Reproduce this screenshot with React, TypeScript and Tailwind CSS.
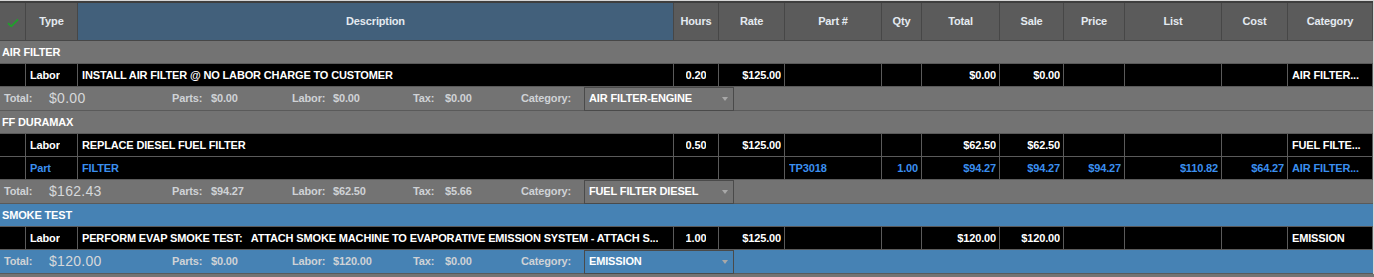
import React from 'react';

type Line = {
  type: 'Labor' | 'Part';
  desc: string;
  hours?: string;
  rate?: string;
  partNo?: string;
  qty?: string;
  total?: string;
  sale?: string;
  price?: string;
  list?: string;
  cost?: string;
  category: string;
};

type Job = {
  title: string;
  blue?: boolean;
  lines: Line[];
  total: string;
  parts: string;
  labor: string;
  tax: string;
  category: string;
};

const JOBS: Job[] = [
  {
    title: 'AIR FILTER',
    lines: [
      { type: 'Labor', desc: 'INSTALL AIR FILTER @ NO LABOR CHARGE TO CUSTOMER', hours: '0.20', rate: '$125.00', total: '$0.00', sale: '$0.00', category: 'AIR FILTER...' },
    ],
    total: '$0.00', parts: '$0.00', labor: '$0.00', tax: '$0.00', category: 'AIR FILTER-ENGINE',
  },
  {
    title: 'FF DURAMAX',
    lines: [
      { type: 'Labor', desc: 'REPLACE DIESEL FUEL FILTER', hours: '0.50', rate: '$125.00', total: '$62.50', sale: '$62.50', category: 'FUEL FILTE...' },
      { type: 'Part', desc: 'FILTER', partNo: 'TP3018', qty: '1.00', total: '$94.27', sale: '$94.27', price: '$94.27', list: '$110.82', cost: '$64.27', category: 'AIR FILTER...' },
    ],
    total: '$162.43', parts: '$94.27', labor: '$62.50', tax: '$5.66', category: 'FUEL FILTER DIESEL',
  },
  {
    title: 'SMOKE TEST',
    blue: true,
    lines: [
      { type: 'Labor', desc: 'PERFORM EVAP SMOKE TEST:   ATTACH SMOKE MACHINE TO EVAPORATIVE EMISSION SYSTEM - ATTACH S...', hours: '1.00', rate: '$125.00', total: '$120.00', sale: '$120.00', category: 'EMISSION' },
    ],
    total: '$120.00', parts: '$0.00', labor: '$120.00', tax: '$0.00', category: 'EMISSION',
  },
];

const GRID = 'grid grid-cols-[26px_52px_596px_45px_66px_97px_40px_78px_64px_61px_97px_66px_85px]';

const HEADERS = ['Type', 'Description', 'Hours', 'Rate', 'Part #', 'Qty', 'Total', 'Sale', 'Price', 'List', 'Cost', 'Category'];

const Check = () => (
  <svg width="12" height="10" viewBox="0 0 12 10">
    <path d="M1 5.2 L4.3 8.3 L11 1.5" fill="none" stroke="#1fa12b" strokeWidth="1.8" />
  </svg>
);

const Cell = ({ children, align = 'left', blue }: { children?: React.ReactNode; align?: 'left' | 'right' | 'center'; blue?: boolean }) => (
  <div
    className={`h-[23px] bg-black border-r border-b border-[#5a5a5a] pl-1 flex items-center overflow-hidden ${
      align === 'right' ? 'justify-end pr-[3px]' : align === 'center' ? 'justify-center pr-1' : 'justify-start pr-[2px]'
    } ${blue ? 'text-[#3b8fef]' : 'text-white'}`}
  >
    <span className="min-w-0 truncate whitespace-pre">{children}</span>
  </div>
);

const Summary = ({ job }: { job: Job }) => (
  <div className={`h-[24px] border-b border-[#5a5a5a] flex items-center pl-[4px] text-[#cfd2d6] ${job.blue ? 'bg-[#4682b4]' : 'bg-[#737373]'}`}>
    <div className="w-[168px] flex items-center">
      <span className="w-[45px]">Total:</span>
      <span className="text-[14px] font-normal tracking-[0.3px] text-[#d6d8da]">{job.total}</span>
    </div>
    <div className="w-[120px] flex">
      <span className="w-[39px]">Parts:</span>
      <span>{job.parts}</span>
    </div>
    <div className="w-[121px] flex">
      <span className="w-[41px]">Labor:</span>
      <span>{job.labor}</span>
    </div>
    <div className="w-[108px] flex">
      <span className="w-[32px]">Tax:</span>
      <span>{job.tax}</span>
    </div>
    <span className="w-[63px]">Category:</span>
    <div className="w-[150px] h-[24px] border border-[#4a4a4a] flex items-center justify-between pl-[4px] pr-[5px] text-white">
      <span>{job.category}</span>
      <span className="w-0 h-0 border-l-[3.5px] border-r-[3.5px] border-t-[4px] border-l-transparent border-r-transparent border-t-[#a8a8a8]" />
    </div>
  </div>
);

const JobBlock = ({ job }: { job: Job }) => (
  <div>
    <div className={`h-[23px] border-b border-[#5a5a5a] flex items-center pl-[2px] text-white ${job.blue ? 'bg-[#4682b4]' : 'bg-[#737373]'}`}>
      {job.title}
    </div>
    {job.lines.map((l, i) => {
      const b = l.type === 'Part';
      return (
        <div key={i} className={GRID}>
          <Cell blue={b} />
          <Cell blue={b}>{l.type}</Cell>
          <Cell blue={b}>{l.desc}</Cell>
          <Cell blue={b} align="center">{l.hours}</Cell>
          <Cell blue={b} align="right">{l.rate}</Cell>
          <Cell blue={b}>{l.partNo}</Cell>
          <Cell blue={b} align="right">{l.qty}</Cell>
          <Cell blue={b} align="right">{l.total}</Cell>
          <Cell blue={b} align="right">{l.sale}</Cell>
          <Cell blue={b} align="right">{l.price}</Cell>
          <Cell blue={b} align="right">{l.list}</Cell>
          <Cell blue={b} align="right">{l.cost}</Cell>
          <Cell blue={b}>{l.category}</Cell>
        </div>
      );
    })}
    <Summary job={job} />
  </div>
);

const App: React.FC = () => {
  return (
    <div className="w-[1374px] h-[277px] overflow-hidden bg-[#737373] font-['Liberation_Sans',Arial,sans-serif] text-[11px] font-bold tracking-[-0.15px]">
      <div className="w-[1374px] border-t border-r border-[#d6d6d6]">
        <div className={`${GRID} border-t-2 border-[#3e3e3e]`}>
          <div className="h-[38px] bg-[#5b5b5b] border-r border-b border-[#474747] flex items-center justify-center pt-[2px]">
            <Check />
          </div>
          {HEADERS.map((h) => (
            <div
              key={h}
              className={`h-[38px] border-r border-b border-[#474747] flex items-center justify-center text-[#e4eaf0] ${
                h === 'Description' ? 'bg-[#42607b]' : 'bg-[#5b5b5b]'
              }`}
            >
              {h}
            </div>
          ))}
        </div>
        {JOBS.map((j) => (
          <JobBlock key={j.title} job={j} />
        ))}
      </div>
    </div>
  );
};

export default App;
